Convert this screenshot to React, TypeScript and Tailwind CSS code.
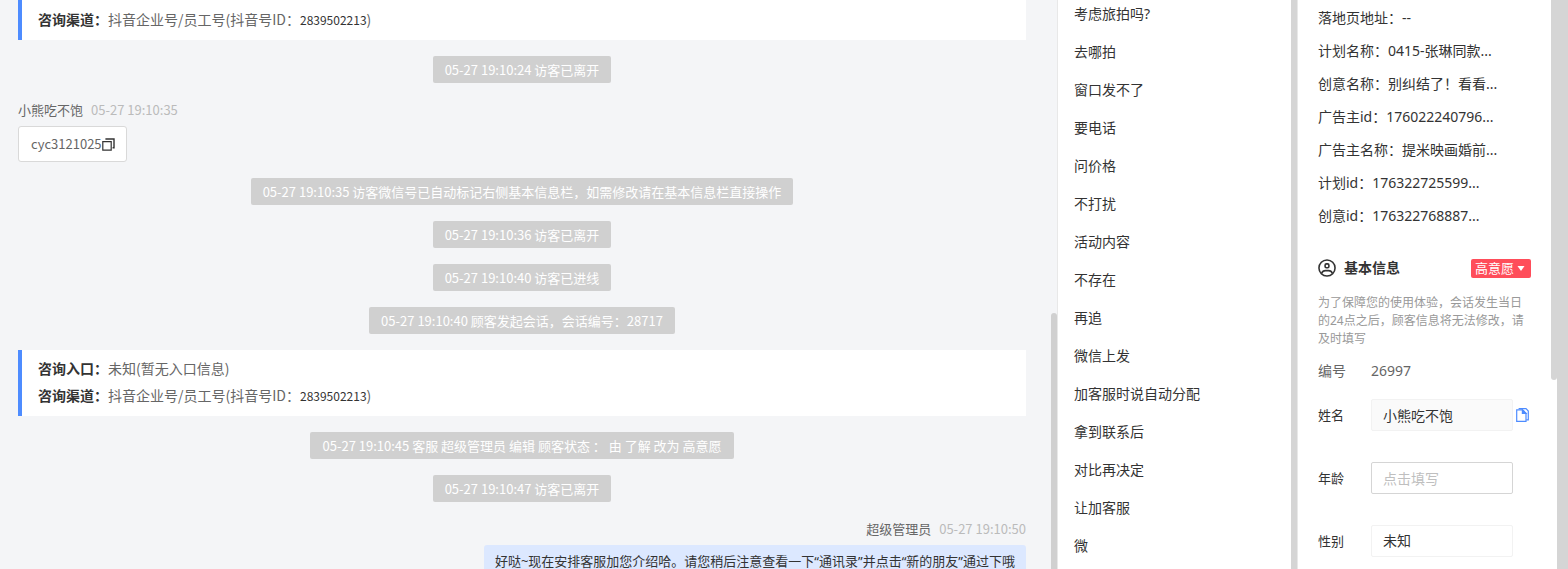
import { type ReactNode } from "react";

const QUICK_REPLIES = [
	"考虑旅拍吗?",
	"去哪拍",
	"窗口发不了",
	"要电话",
	"问价格",
	"不打扰",
	"活动内容",
	"不存在",
	"再追",
	"微信上发",
	"加客服时说自动分配",
	"拿到联系后",
	"对比再决定",
	"让加客服",
	"微",
];

const AD_FIELDS = [
	{ label: "落地页地址", value: "--" },
	{ label: "计划名称", value: "0415-张琳同款..." },
	{ label: "创意名称", value: "别纠结了！看看..." },
	{ label: "广告主id", value: "176022240796..." },
	{ label: "广告主名称", value: "提米映画婚前..." },
	{ label: "计划id", value: "176322725599..." },
	{ label: "创意id", value: "176322768887..." },
];

function Notice({ children }: { children: ReactNode }) {
	return (
		<p className="self-center rounded-xs bg-[#d0d0d0] px-3 text-[13px] leading-[27px] text-white">
			{children}
		</p>
	);
}

function SourceCard({ children }: { children: ReactNode }) {
	return (
		<section className="border-l-4 border-[#4e8cff] bg-white px-4 pt-[5px] pb-[7px] first:pt-1.5">
			{children}
		</section>
	);
}

function SourceLine({
	label,
	children,
}: {
	label: string;
	children: ReactNode;
}) {
	return (
		<p className="text-sm leading-[27px] text-[#666]">
			<b className="font-bold text-[#333]">{label}：</b>
			{children}
		</p>
	);
}

function ChannelLine() {
	return (
		<SourceLine label="咨询渠道">
			抖音企业号/员工号(抖音号ID：
			<span className="text-xs text-[#333]">2839502213</span>)
		</SourceLine>
	);
}

function MessageMeta({ name, time }: { name: string; time: string }) {
	return (
		<div className="mb-[5px] flex gap-2 text-[13px] leading-[22px]">
			<span className="text-[#666]">{name}</span>
			<time className="text-[#bbb]">{time}</time>
		</div>
	);
}

function CopyIcon() {
	return (
		<svg viewBox="0 0 13 13" className="size-[13px]" fill="none">
			<path d="M0.8 3.6H9.2V12.2H0.8Z" stroke="#333" strokeWidth="1.2" />
			<path d="M3.4 1H12V9.8H10.6" stroke="#333" strokeWidth="1.4" />
		</svg>
	);
}

function CopyFileIcon() {
	return (
		<svg
			viewBox="0 0 13 14"
			className="h-3.5 w-[13px]"
			fill="none"
			stroke="#4e8cff"
			strokeWidth="1.2"
		>
			<path d="M0.7 1.9H6.6L10 5.2V13.3H0.7Z" />
			<path d="M2.6 0.7H10L12.3 3V11.9H10.2" />
			<path d="M6.4 2V5.4H10Z" fill="#4e8cff" />
		</svg>
	);
}

function UserIcon() {
	return (
		<svg
			viewBox="0 0 17 17"
			className="size-[18px]"
			fill="none"
			stroke="#333"
			strokeWidth="1.5"
		>
			<circle cx="8.5" cy="8.5" r="7.6" />
			<rect x="6.7" y="4.6" width="3.6" height="3.6" rx="1.2" />
			<path d="M3.4 13.6C4.2 11.7 5.4 11 7 11H10C11.6 11 12.8 11.7 13.6 13.6" />
		</svg>
	);
}

function ChatPanel() {
	return (
		<main className="flex min-w-0 flex-1 bg-[#f4f5f7] font-['Noto_Sans_CJK_SC',sans-serif]">
			<div className="flex min-w-0 flex-1 flex-col gap-4 pr-[25px] pl-[18px]">
				<SourceCard>
					<ChannelLine />
				</SourceCard>
				<Notice>05-27 19:10:24 访客已离开</Notice>
				<article className="flex flex-col items-start">
					<MessageMeta name="小熊吃不饱" time="05-27 19:10:35" />
					<div className="flex h-9 items-center rounded-[3px] border border-[#d9d9d9] bg-white pr-[11px] pl-3 text-[13px] text-[#666]">
						cyc3121025
						<button type="button" aria-label="复制">
							<CopyIcon />
						</button>
					</div>
				</article>
				<Notice>
					05-27 19:10:35
					访客微信号已自动标记右侧基本信息栏，如需修改请在基本信息栏直接操作
				</Notice>
				<Notice>05-27 19:10:36 访客已离开</Notice>
				<Notice>05-27 19:10:40 访客已进线</Notice>
				<Notice>05-27 19:10:40 顾客发起会话，会话编号：28717</Notice>
				<SourceCard>
					<SourceLine label="咨询入口">未知(暂无入口信息)</SourceLine>
					<ChannelLine />
				</SourceCard>
				<Notice>
					05-27 19:10:45 客服 超级管理员 编辑 顾客状态 ： 由 了解 改为 高意愿
				</Notice>
				<Notice>05-27 19:10:47 访客已离开</Notice>
				<article className="flex flex-col items-end">
					<MessageMeta name="超级管理员" time="05-27 19:10:50" />
					<p className="rounded-[3px] bg-[#dce8ff] px-[11px] py-2 font-['Noto_Sans','Noto_Sans_CJK_SC',sans-serif] text-[13px] leading-4 text-[#333]">
						好哒~现在安排客服加您介绍哈。请您稍后注意查看一下“通讯录”并点击“新的朋友”通过下哦
					</p>
				</article>
			</div>
			<div className="w-1.5 pt-[313px]">
				<div className="h-full rounded-t-full bg-[#d0d0d0]" />
			</div>
		</main>
	);
}

function QuickReplyPanel() {
	return (
		<nav className="flex w-[240px] shrink-0 border-l border-[#e8e8e8] bg-white">
			<ul className="flex flex-1 flex-col gap-[18px] px-4 pt-1 text-sm leading-5 text-[#333]">
				{QUICK_REPLIES.map((reply) => (
					<li key={reply}>
						<button type="button" className="block">
							{reply}
						</button>
					</li>
				))}
			</ul>
			<div className="w-1.5 bg-[#d5d5d5]" />
		</nav>
	);
}

function CustomerPanel() {
	return (
		<aside className="flex w-[260px] shrink-0 border-l border-[#e8e8e8] bg-white">
			<div className="flex-1 px-5 pt-2 text-sm leading-5 text-[#333]">
				<ul className="flex flex-col gap-[13px]">
					{AD_FIELDS.map((field) => (
						<li key={field.label} className="whitespace-nowrap">
							{field.label}：{field.value}
						</li>
					))}
				</ul>
				<header className="mt-8 flex items-center">
					<UserIcon />
					<h2 className="ml-2 font-bold">基本信息</h2>
					<button
						type="button"
						className="ml-auto flex h-[19px] items-center gap-[3px] rounded-xs bg-[#ff4d5a] pr-1.5 pl-1 text-[13px] text-white"
					>
						高意愿
						<svg viewBox="0 0 8 5" className="h-[5px] w-2" fill="#fff">
							<path d="M0.5 0H7.5L4 5Z" />
						</svg>
					</button>
				</header>
				<p className="mt-4 text-xs leading-[18px] text-[#999]">
					为了保障您的使用体验，会话发生当日的24点之后，顾客信息将无法修改，请及时填写
				</p>
				<dl className="mt-[13px] flex text-[#666]">
					<dt className="w-[53px]">编号</dt>
					<dd>26997</dd>
				</dl>
				<form className="mt-[18px] flex flex-col gap-[31px]">
					<div className="flex items-center">
						<label htmlFor="name" className="w-[53px] text-[13px]">
							姓名
						</label>
						<input
							id="name"
							defaultValue="小熊吃不饱"
							className="h-8 w-[142px] rounded-xs border border-[#f2f2f2] bg-[#fafafa] px-[11px]"
						/>
						<button type="button" aria-label="复制姓名" className="ml-[3px]">
							<CopyFileIcon />
						</button>
					</div>
					<div className="flex items-center">
						<label htmlFor="age" className="w-[53px] text-[13px]">
							年龄
						</label>
						<input
							id="age"
							placeholder="点击填写"
							className="h-8 w-[142px] rounded-xs border border-[#d5d5d5] px-[11px] placeholder:text-[#bfbfbf]"
						/>
					</div>
					<div className="flex items-center">
						<label htmlFor="gender" className="w-[53px] text-[13px]">
							性别
						</label>
						<select
							id="gender"
							className="h-8 w-[142px] appearance-none rounded-xs border border-[#f2f2f2] px-[11px]"
						>
							<option>未知</option>
							<option>男</option>
							<option>女</option>
						</select>
					</div>
				</form>
			</div>
			<div className="w-1.5">
				<div className="h-[380px] rounded-b-full bg-[#d5d5d5]" />
			</div>
		</aside>
	);
}

export default function App() {
	return (
		<div className="flex h-screen overflow-hidden bg-[#d5d5d5] pr-[11px] font-['Noto_Sans','Noto_Sans_CJK_SC',sans-serif]">
			<ChatPanel />
			<QuickReplyPanel />
			<CustomerPanel />
		</div>
	);
}
